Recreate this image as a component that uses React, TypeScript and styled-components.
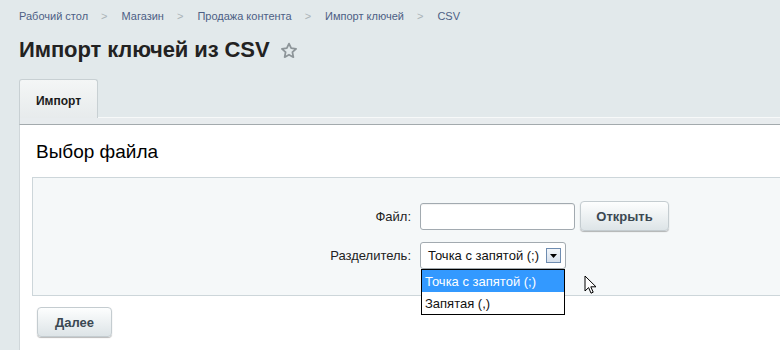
import React from "react";
import styled, { createGlobalStyle } from "styled-components";

const Global = createGlobalStyle`
  html, body { margin: 0; padding: 0; }
  body {
    background: #e2e9eb;
    font-family: "Liberation Sans", Arial, sans-serif;
    overflow: hidden;
  }
`;

const Page = styled.div`
  width: 780px;
  height: 350px;
  overflow: hidden;
  padding-left: 19px;
  box-sizing: border-box;
  position: relative;
`;

const Crumbs = styled.nav`
  display: flex;
  align-items: center;
  height: 32px;
  font-size: 11px;
  color: #4d5f85;
`;

const Crumb = styled.span`
  white-space: nowrap;
`;

const Sep = styled.span`
  color: #aab3b7;
  margin: 0 14px 0 13px;
  font-size: 11px;
`;

const TitleRow = styled.div`
  display: flex;
  align-items: center;
  gap: 10px;
  height: 36px;
`;

const Title = styled.h1`
  margin: 0;
  font-size: 22px;
  font-weight: bold;
  color: #222;
  letter-spacing: -0.1px;
`;

const TabRow = styled.div`
  display: flex;
  align-items: flex-end;
  margin-top: 11px;
`;

const Tab = styled.div`
  width: 79px;
  height: 39px;
  box-sizing: border-box;
  border: 1px solid #c8d0d3;
  border-bottom: none;
  border-radius: 3px 3px 0 0;
  background: linear-gradient(#f4f6f6, #e7ebec);
  display: flex;
  align-items: center;
  justify-content: center;
  font-size: 12px;
  font-weight: bold;
  color: #1b1b1b;
  padding-top: 4px;
`;

const TabFill = styled.div`
  flex: 1;
  border-bottom: 1px solid #f7f9f9;
`;

const Strip = styled.div`
  height: 6px;
  background: #e8ecee;
  border-bottom: 1px solid #a3aaad;
  border-left: 1px solid #c8d0d3;
`;

const Panel = styled.div`
  background: #fff;
  border-left: 1px solid #d0d7da;
  padding: 0 0 20px 12px;
  height: 240px;
`;

const Heading = styled.h2`
  margin: 0;
  padding: 16px 0 0 4px;
  height: 36px;
  box-sizing: content-box;
  font-size: 19px;
  font-weight: normal;
  color: #000;
`;

const FormBox = styled.div`
  position: relative;
  margin-right: -30px;
  background: #f5f8f9;
  border: 1px solid #cdd6da;
  height: 119px;
  box-sizing: border-box;
  display: grid;
  grid-template-columns: 378px 1fr;
  column-gap: 9px;
  row-gap: 11px;
  align-content: start;
  padding-top: 23px;
`;

const Label = styled.div`
  text-align: right;
  font-size: 13px;
  color: #222;
  align-self: center;
`;

const Controls = styled.div`
  display: flex;
  align-items: center;
  gap: 5px;
  position: relative;
`;

const TextInput = styled.div`
  width: 155px;
  height: 27px;
  box-sizing: border-box;
  border: 1px solid #a2aab0;
  border-radius: 3px;
  background: #fff;
  box-shadow: inset 0 1px 1px rgba(0, 0, 0, 0.06);
`;

const Button = styled.div<{ $w: number }>`
  width: ${(p) => p.$w}px;
  height: 30px;
  box-sizing: border-box;
  border: 1px solid #c4ccd0;
  border-radius: 4px;
  background: linear-gradient(#fdfefe, #dde4e7);
  box-shadow: 0 1px 1px rgba(0, 0, 0, 0.28);
  display: flex;
  align-items: center;
  justify-content: center;
  font-size: 13px;
  font-weight: bold;
  color: #3b4852;
`;

const Select = styled.div`
  width: 146px;
  height: 27px;
  box-sizing: border-box;
  border: 1px solid #a2aab0;
  border-radius: 3px;
  background: #fff;
  display: flex;
  align-items: center;
  justify-content: space-between;
  padding: 0 4px 0 7px;
  font-size: 13px;
  color: #111;
`;

const ArrowBox = styled.div`
  width: 15px;
  height: 15px;
  box-sizing: border-box;
  border: 1px solid #6e8cb0;
  background: linear-gradient(#f3f6fa, #d6e0ec);
  display: flex;
  align-items: center;
  justify-content: center;
`;

const DropList = styled.div`
  position: absolute;
  left: 1px;
  top: 27px;
  width: 144px;
  box-sizing: border-box;
  border: 1px solid #000;
  background: #fff;
  z-index: 2;
`;

const Option = styled.div<{ $active?: boolean }>`
  height: 22px;
  display: flex;
  align-items: center;
  padding-left: 3px;
  font-size: 13px;
  background: ${(p) => (p.$active ? "#3399ff" : "#fff")};
  color: ${(p) => (p.$active ? "#fff" : "#111")};
`;

const Footer = styled.div`
  padding: 11px 0 0 5px;
`;

const Cursor = styled.svg`
  position: absolute;
  left: 584px;
  top: 275px;
  z-index: 3;
`;

export default function App() {
  const crumbs = ["Рабочий стол", "Магазин", "Продажа контента", "Импорт ключей", "CSV"];
  return (
    <>
      <Global />
      <Page>
        <Crumbs>
          {crumbs.map((c, i) => (
            <React.Fragment key={c}>
              {i > 0 && <Sep>&gt;</Sep>}
              <Crumb>{c}</Crumb>
            </React.Fragment>
          ))}
        </Crumbs>
        <TitleRow>
          <Title>Импорт ключей из CSV</Title>
          <svg width="18" height="17" viewBox="0 0 24 23">
            <path
              d="M12 2.2l2.9 6.2 6.7.8-5 4.6 1.3 6.7L12 17.2l-5.9 3.3 1.3-6.7-5-4.6 6.7-.8z"
              fill="none"
              stroke="#8d9599"
              strokeWidth="2.4"
              strokeLinejoin="round"
            />
          </svg>
        </TitleRow>
        <TabRow>
          <Tab>Импорт</Tab>
          <TabFill />
        </TabRow>
        <Strip />
        <Panel>
          <Heading>Выбор файла</Heading>
          <FormBox>
            <Label>Файл:</Label>
            <Controls>
              <TextInput />
              <Button $w={89}>Открыть</Button>
            </Controls>
            <Label>Разделитель:</Label>
            <Controls>
              <Select>
                <span>Точка с запятой (;)</span>
                <ArrowBox>
                  <svg width="7" height="4" viewBox="0 0 7 4">
                    <path d="M0 0h7L3.5 4z" fill="#000" />
                  </svg>
                </ArrowBox>
              </Select>
              <DropList>
                <Option $active>Точка с запятой (;)</Option>
                <Option>Запятая (,)</Option>
              </DropList>
            </Controls>
          </FormBox>
          <Footer>
            <Button $w={75}>Далее</Button>
          </Footer>
        </Panel>
        <Cursor width="14" height="20" viewBox="0 0 14 20">
          <path
            d="M1 1v15l3.6-3.4 2.4 5.6 2.2-1-2.4-5.4H12z"
            fill="#fff"
            stroke="#000"
            strokeWidth="1"
            strokeLinejoin="miter"
          />
        </Cursor>
      </Page>
    </>
  );
}
